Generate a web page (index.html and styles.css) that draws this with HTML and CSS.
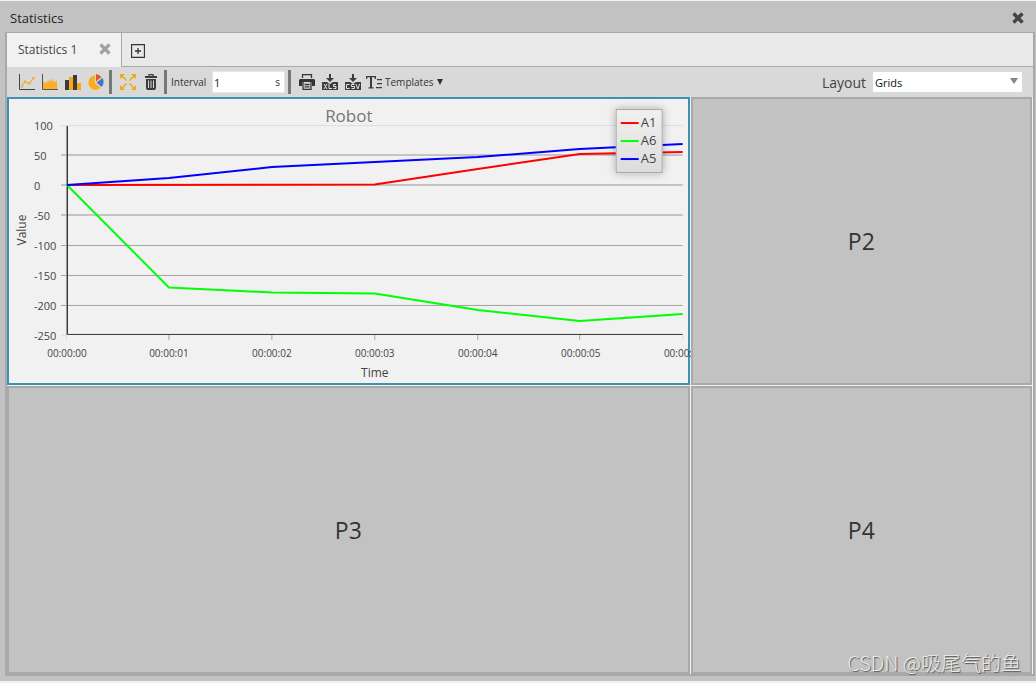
FILE: index.html
```html
<!DOCTYPE html>
<html lang="en">
<head>
<meta charset="utf-8">
<title>Statistics</title>
<link rel="stylesheet" href="styles.css">
</head>
<body>
<div class="window">
  <header class="titlebar">
    <h1 class="title">Statistics</h1>
    <button class="close" type="button" aria-label="Close window">
      <svg width="12" height="12" viewBox="0 0 12 12"><path d="M1.5 1.5 10.5 10.5M10.5 1.5 1.5 10.5" stroke="#444" stroke-width="3.4"/></svg>
    </button>
  </header>
  <main class="frame">
    <nav class="tabs">
      <div class="tab">
        <span>Statistics 1</span>
        <button type="button" aria-label="Close tab">
          <svg width="12" height="12" viewBox="0 0 12 12"><path d="M1.5 1.5 10.5 10.5M10.5 1.5 1.5 10.5" stroke="#a2a2a2" stroke-width="3.2"/></svg>
        </button>
      </div>
      <button class="add" type="button" aria-label="Add tab">
        <svg width="14" height="14" viewBox="0 0 14 14"><path d="M.5 .5H13.5V13.5H.5ZM7 4V10M4 7H10" fill="none" stroke="#333" stroke-width="1.3"/></svg>
      </button>
    </nav>
    <div class="toolbar">
      <div class="tools">
        <button type="button" aria-label="Line chart"><svg width="16" height="16" viewBox="0 0 16 16"><path d="M.5 0V15.5H16" fill="none" stroke="#444"/><path d="M2.5 12.5 6 7.5 10.500 9.500 14.500 4" fill="none" stroke="#f2ab20" stroke-width="1.200"/><path d="M2 11.500h2v2H2zM5 6.500h2v2H5zM9.500 8.500h2v2h-2zM13.500 3h2v2h-2z" fill="#f2ab20"/></svg></button>
        <button type="button" aria-label="Area chart"><svg width="16" height="16" viewBox="0 0 16 16"><path d="M1 15V6L2 9 3 8 4 10 5 6 6 9 7 5 8 8 9 4 10 8 11 5 12 9 13 6 14 9 15 5V15Z" fill="#fbad2c"/><path d="M.5 0V15.500H16" fill="none" stroke="#555"/></svg></button>
        <button type="button" aria-label="Bar chart"><svg width="16" height="16" viewBox="0 0 16 16"><path d="M0 6H4V16H0ZM8 1H12V16H8Z" fill="#3c3c3c"/><path d="M4 3H8V16H4ZM12 9H16V16H12Z" fill="#f6a91c"/></svg></button>
        <button type="button" aria-label="Pie chart"><svg width="16" height="16" viewBox="0 0 16 16"><path d="M7 1.500V9L12.500 14A7.200 7.200 0 1 1 7 1.500Z" fill="#fbad18"/><path d="M8 0A8 8 0 0 1 13.500 3L8 7.500Z" fill="#e4572e"/><path d="M14.500 4A8 8 0 0 1 13.500 13L8.500 8.500Z" fill="#4178be"/></svg></button>
      </div>
      <i class="sep"></i>
      <div class="tools wide">
        <button type="button" aria-label="Fit to view"><svg width="16" height="16" viewBox="0 0 16 16"><path d="M1 1 6.500 6.500M15 1 9.500 6.500M1 15 6.500 9.500M15 15 9.500 9.500" stroke="#edab14" stroke-width="1.600"/><path d="M0 0H5L0 5ZM16 0H11L16 5ZM0 16H5L0 11ZM16 16H11L16 11Z" fill="#edab14"/></svg></button>
        <button type="button" aria-label="Delete"><svg width="16" height="16" viewBox="0 0 16 16"><path d="M6 2V.700H10V2" fill="none" stroke="#3c3c3c" stroke-width="1.200"/><path d="M2 2H14V4H2ZM3 5H13V14Q13 16 11 16H5Q3 16 3 14Z" fill="#3c3c3c"/><path d="M5.500 6.500V14M8 6.500V14M10.500 6.500V14" stroke="#d9d9d9"/></svg></button>
      </div>
      <i class="sep flush"></i>
      <label class="interval-label" for="interval">Interval</label>
      <div class="interval"><input id="interval" type="text" value="1"><span>s</span></div>
      <i class="sep end"></i>
      <div class="tools wide">
        <button type="button" aria-label="Print"><svg width="16" height="16" viewBox="0 0 16 16"><path d="M3.500 4V.700H12.500V4" fill="none" stroke="#333" stroke-width="1.300"/><path d="M1 5H15L16 6V12H13V8H3V12H0V6Z" fill="#333"/><path d="M4 8V15.300H12V8M5.500 10.500H10.500M5.500 12.800H10.500" fill="none" stroke="#333" stroke-width="1.300"/></svg></button>
        <button type="button" aria-label="Export XLS"><svg width="16" height="16" viewBox="0 0 16 16"><path d="M7 0H9V4H12L8 8 4 4H7ZM0 8H5L8 10 11 8H16V16H0Z" fill="#3c3c3c"/><path d="M2 10 5 15M5 10 2 15M7 9.500V14.500H10M14 10.500H11.500V12.500H14V14.500H11.500" fill="none" stroke="#e5e5e5"/></svg></button>
        <button type="button" aria-label="Export CSV"><svg width="16" height="16" viewBox="0 0 16 16"><path d="M7 0H9V4H12L8 8 4 4H7ZM0 8H5L8 10 11 8H16V16H0Z" fill="#3c3c3c"/><path d="M4.500 10.500H1.500V14.500H4.500M9.500 10.500H6.500V12.500H9.500V14.500H6.500M11 10 12.800 15 14.600 10" fill="none" stroke="#e5e5e5"/></svg></button>
      </div>
      <button class="templates" type="button">
        <svg width="16" height="16" viewBox="0 0 16 16"><path d="M.600 5V2.600H9.400V5M5 3V14" fill="none" stroke="#3c3c3c" stroke-width="1.300"/><path d="M4 2H6V14H4ZM2.500 13.200H7.500V14.400H2.500ZM11 5H16V6.300H11ZM11 9H16V10.300H11ZM10 13H16V14.300H10Z" fill="#3c3c3c"/></svg>
        <span>Templates</span>
        <svg width="6" height="6" viewBox="0 0 6 6"><path d="M0 0H6L3 6Z" fill="#333"/></svg>
      </button>
      <div class="layout">
        <label for="layout">Layout</label>
        <div class="combo">
          <select id="layout"><option>Grids</option></select>
          <svg class="arrow" width="8" height="6" viewBox="0 0 8 6"><path d="M0 0H8L4 6Z" fill="#858585"/></svg>
        </div>
      </div>
    </div>
    <section class="panels">
      <article class="panel active">
        <svg class="chart" viewBox="9 99 679 284" role="img" aria-label="Robot chart">
          <defs>
            <linearGradient id="legend-fill" x2="0" y2="1"><stop stop-color="#f0f0f0"/><stop offset="1" stop-color="#dcdcdc"/></linearGradient>
            <filter id="legend-shadow" x="-30%" y="-30%" width="160%" height="160%"><feDropShadow dx="0" dy="0" stdDeviation="4" flood-opacity=".3"/></filter>
          </defs>
          <text class="chart-title" x="349" y="122">Robot</text>
          <g class="grid">
            <path class="faint" d="M61 125.500H683"/>
            <path class="soft" d="M61 155H683M61 185H683M61 215H683"/>
            <path d="M61 245.500H683M61 275.500H683M61 305.500H683"/>
            <path d="M169 335V340M272 335V340M375 335V340M478 335V340M580 335V340"/>
            <path class="faint" d="M61 335.500H67M66.500 335V340M683.500 335V340"/>
          </g>
          <path class="axis" d="M67.500 126V334.500H683"/>
          <path class="axis-edge" d="M66.500 126V335"/>
          <g class="values">
            <text x="34" y="130">100</text><text x="34" y="160">50</text><text x="34" y="190">0</text><text x="34" y="220">-50</text>
            <text x="34" y="250">-100</text><text x="34" y="280">-150</text><text x="34" y="310">-200</text><text x="34" y="340">-250</text>
          </g>
          <g class="times">
            <text x="67" y="357">00:00:00</text><text x="169" y="357">00:00:01</text><text x="272" y="357">00:00:02</text><text x="375" y="357">00:00:03</text>
            <text x="478" y="357">00:00:04</text><text x="581" y="357">00:00:05</text><text x="684" y="357">00:00:06</text>
          </g>
          <text class="axis-name" x="375" y="377">Time</text>
          <text class="axis-name" transform="translate(26 230) rotate(-90)">Value</text>
          <g class="series">
            <polyline stroke="#f00" points="67,185 375,184.500 478,169 580,154 683,152"/>
            <polyline stroke="#0f0" points="67,185 169,287.500 272,292.500 375,293.500 478,310 580,321 683,314"/>
            <polyline stroke="#00f" points="67,185 169,178 272,167 375,162 478,157 580,149 683,144"/>
          </g>
          <rect x="616.500" y="109.500" width="46" height="63" fill="url(#legend-fill)" stroke="#aaa" filter="url(#legend-shadow)"/>
          <path d="M621 123H639" stroke="#f00" stroke-width="2"/><path d="M621 141H639" stroke="#0f0" stroke-width="2"/><path d="M621 159H639" stroke="#00f" stroke-width="2"/>
          <g class="legend"><text x="641" y="127">A1</text><text x="641" y="145">A6</text><text x="641" y="163">A5</text></g>
        </svg>
      </article>
      <article class="panel">P2</article>
      <article class="panel">P3</article>
      <article class="panel">P4</article>
    </section>
  </main>
  <div class="watermark">CSDN @吸尾气的鱼</div>
</div>
</body>
</html>
```
FILE: styles.css
```css
* { box-sizing: border-box; }
body {
  margin: 0;
  height: 100vh;
  padding: 1px 0 2px;
  background: #f1f1f1;
  color: #333;
  font-family: "Open Sans", "Noto Sans", sans-serif;
  font-size: 10px;
}
button {
  display: flex;
  align-items: center;
  padding: 0;
  border: 0;
  background: none;
  color: inherit;
  font: inherit;
}
svg { display: block; flex: none; }
.window {
  position: relative;
  display: flex;
  flex-direction: column;
  height: 100%;
  padding: 0 1px 5px 5px;
  background: #c2c2c2;
}
.titlebar {
  display: flex;
  align-items: center;
  justify-content: space-between;
  height: 31px;
  padding: 3px 11px 0 5px;
}
.title { margin: 0; color: #222; font-size: 13px; font-weight: 400; }
.frame {
  flex: 1;
  display: flex;
  flex-direction: column;
  min-height: 0;
  border: solid #a9a9a9;
  border-width: 1px 2px 2px;
}
.tabs {
  display: flex;
  height: 34px;
  border-bottom: 1px solid #a9a9a9;
  background: #e9e9e9;
}
.tab {
  display: flex;
  align-items: center;
  justify-content: space-between;
  width: 115px;
  height: 34px;
  padding: 0 10px 2px 11px;
  border-right: 1px solid #a9a9a9;
  background: #f1f1f1;
  color: #444;
  font-size: 12px;
}
.add { margin-left: 9px; padding-top: 3px; }
.toolbar {
  display: flex;
  align-items: center;
  height: 30px;
  padding: 0 11px 0 12px;
  background: #d9d9d9;
}
.tools { display: flex; gap: 7px; }
.sep { width: 3px; height: 24px; margin: 0 8px 0 5px; background: #777; }
.sep.flush { margin-right: 4px; }
.sep.end { margin-left: 3px; }
.interval-label { width: 41px; }
.interval {
  display: flex;
  align-items: center;
  width: 73px;
  height: 22px;
  padding: 0 4px 0 1px;
  border: 1px solid #e6e6e6;
  background: #fff;
}
.interval input {
  flex: 1;
  min-width: 0;
  padding: 0;
  border: 0;
  background: none;
  color: #222;
  font: inherit;
  font-size: 11px;
}
.templates { gap: 3px; margin-left: 5px; font-size: 10px; }
.layout { display: flex; align-items: center; gap: 7px; margin-left: auto; color: #444; font-size: 14px; }
.combo { position: relative; width: 149px; }
.combo select {
  display: block;
  width: 100%;
  height: 20px;
  padding: 0 2px;
  border: 0;
  border-radius: 0;
  appearance: none;
  background: #fff;
  color: #111;
  font: inherit;
  font-size: 11px;
}
.arrow { position: absolute; top: 6px; right: 4px; pointer-events: none; }
.panels {
  flex: 1;
  display: grid;
  grid-template: 1fr 1fr / 2fr 1fr;
  gap: 1px;
  min-height: 0;
  padding-right: 1px;
  background: #f1f1f1;
}
.panel {
  display: flex;
  align-items: center;
  justify-content: center;
  min-width: 0;
  min-height: 0;
  border: 2px solid #a9a9a9;
  background: #c2c2c2;
  font-size: 23px;
}
.panel.active { border-color: #3e91b2; background: #f1f1f1; }
.chart { width: 100%; height: 100%; overflow: visible; fill: #444; }
.chart-title { fill: #777; font-size: 17px; text-anchor: middle; }
.grid path { fill: none; stroke: #a4a4a4; }
.grid .soft { stroke: #c4c4c4; stroke-width: 2; }
.grid .faint { stroke: #ddd; }
.axis { fill: none; stroke: #333; }
.axis-edge { stroke: #999; }
.values { font-size: 11px; }
.times { font-size: 10px; text-anchor: middle; }
.axis-name { font-size: 12px; text-anchor: middle; }
.series { fill: none; stroke-width: 2; }
.legend { font-size: 13px; }
.watermark {
  position: absolute;
  right: 15px;
  bottom: 3px;
  color: #e8e8e8;
  font-family: "Noto Sans CJK SC", sans-serif;
  font-size: 20px;
  font-weight: 300;
  line-height: 30px;
  text-shadow: 1px 1px 1px #555;
}
```
